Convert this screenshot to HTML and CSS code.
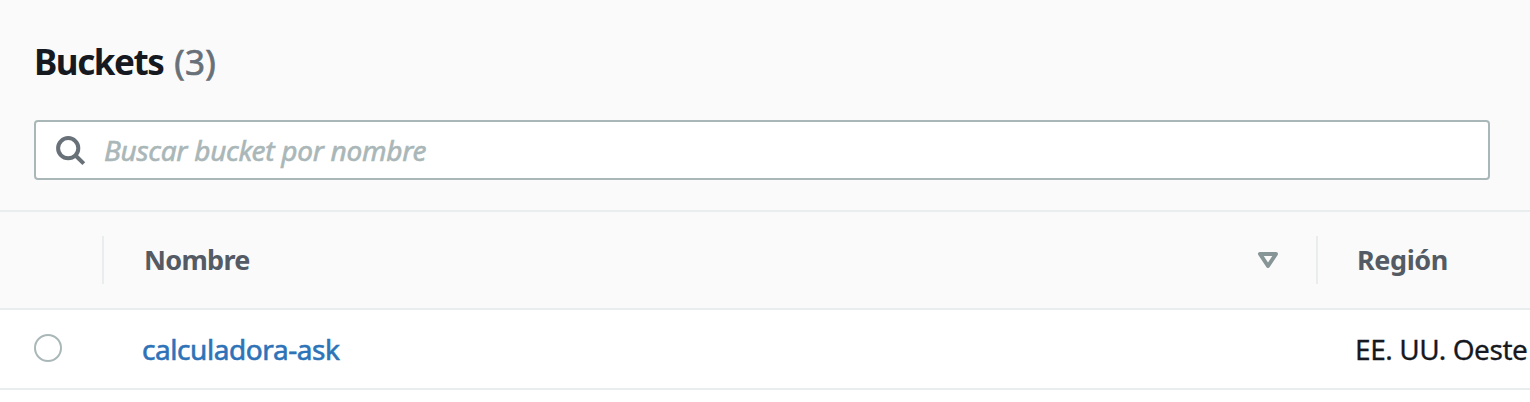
FILE: index.html
```html
<!DOCTYPE html>
<html lang="es">
<head>
<meta charset="utf-8">
<title>Buckets</title>
<link rel="stylesheet" href="styles.css">
</head>
<body>
<header class="panel">
<h1 class="title"><span class="name">Buckets</span> <span class="count">(3)</span></h1>
<div class="search">
<svg class="search-icon" viewBox="0 0 32 32" width="32" height="32"><circle cx="14.200" cy="14.200" r="10.100" /><path d="M21.500 21.500L29.800 29.600" /></svg>
<span class="placeholder">Buscar bucket por nombre</span>
</div>
</header>
<div class="row head">
<div class="cell select"></div>
<div class="cell name-cell"><span class="label nombre">Nombre</span>
<svg class="sort" viewBox="0 0 22 18" width="22" height="18"><path d="M3 3H19L11 15Z" /></svg></div>
<div class="cell region-cell"><span class="label region">Región</span></div>
</div>
<div class="row item">
<div class="cell select"><span class="radio"></span></div>
<div class="cell name-cell"><a class="link">calculadora-ask</a></div>
<div class="cell region-cell"><span class="value">EE. UU. Oeste</span></div>
</div>
</body>
</html>
```
FILE: styles.css
```css
* { box-sizing: border-box; }
body { margin: 0; height: 402px; overflow: hidden; background: #fff; font-family: "Noto Sans", sans-serif; color: #16191f; }
.panel { height: 212px; padding: 38px 40px 0 34px; background: #fafafa; border-bottom: 2px solid #eaeded; }
.title { margin: 0; height: 48px; line-height: 48px; font-size: 35px; white-space: nowrap; display: flex; gap: 11px; }
.name { font-weight: 700; letter-spacing: -1.45px; }
.count { font-weight: 400; color: #687078; letter-spacing: .2px; -webkit-text-stroke: .7px; }
.search { margin-top: 34px; height: 60px; border: 2px solid #aab7b8; border-radius: 4px; background: #fff; display: flex; align-items: center; padding-left: 18px; gap: 18px; }
.search-icon { fill: none; stroke: #687078; stroke-width: 4; }
.placeholder { font-style: italic; font-size: 28px; line-height: 40px; margin-top: -1px; color: #aab7b8; letter-spacing: -.27px; white-space: nowrap; -webkit-text-stroke: .6px; }
.row { display: grid; grid-template-columns: 102px 1214px 214px; }
.head { height: 98px; padding: 24px 0; background: #fafafa; border-bottom: 2px solid #eaeded; }
.head .cell + .cell { border-left: 2px solid #eaeded; }
.item { height: 80px; border-bottom: 2px solid #eaeded; }
.cell { display: flex; align-items: center; white-space: nowrap; }
.select { padding-left: 34px; }
.name-cell { padding: 0 37px 0 40px; justify-content: space-between; }
.region-cell { padding-left: 40px; }
.label { font-size: 27px; font-weight: 700; color: #545b64; margin-top: -1px; letter-spacing: -.7px; }
.region { letter-spacing: -.4px; margin-left: -1px; }
.sort { fill: none; stroke: #879596; stroke-width: 4; stroke-linejoin: round; }
.radio { width: 28px; height: 28px; margin-bottom: 2px; border: 2px solid #aab7b8; border-radius: 50%; }
.link { color: #2e73b8; font-size: 28px; letter-spacing: -.43px; -webkit-text-stroke: .6px; }
.value { font-size: 28px; letter-spacing: -.43px; margin-left: -1px; -webkit-text-stroke: .3px; }
```
